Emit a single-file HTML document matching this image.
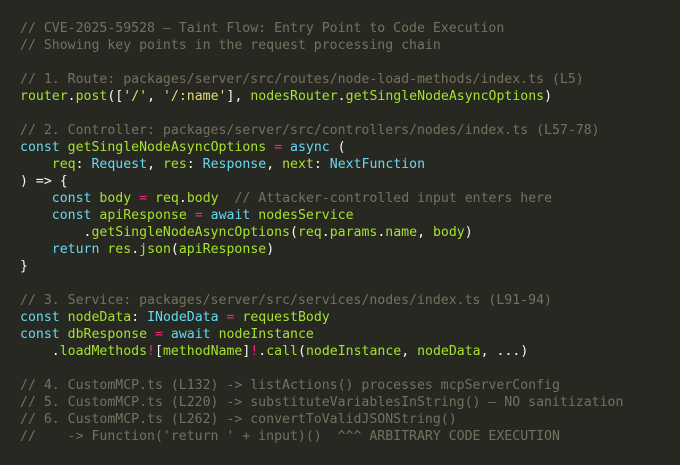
<!DOCTYPE html>
<html><head><meta charset="utf-8"><style>
html,body{margin:0;padding:0;background:#272822;width:680px;height:465px;overflow:hidden}
pre{margin:0;padding:19.5px 0 0 20px;font-family:"DejaVu Sans Mono","Liberation Mono",monospace;font-size:13.2px;line-height:17.03px;color:#f8f8f2}
.c{color:#75715e}.k{color:#66d9ef}.g{color:#a6e22e}.p{color:#f92672}.s{color:#e6db74}
</style></head><body><pre><span class="c">// CVE-2025-59528 — Taint Flow: Entry Point to Code Execution</span>
<span class="c">// Showing key points in the request processing chain</span>

<span class="c">// 1. Route: packages/server/src/routes/node-load-methods/index.ts (L5)</span>
<span class="g">router</span>.<span class="g">post</span>([<span class="s">'/'</span>, <span class="s">'/:name'</span>], <span class="g">nodesRouter</span>.<span class="g">getSingleNodeAsyncOptions</span>)

<span class="c">// 2. Controller: packages/server/src/controllers/nodes/index.ts (L57-78)</span>
<span class="k">const</span> <span class="g">getSingleNodeAsyncOptions</span> <span class="p">=</span> <span class="k">async</span> (
    <span class="g">req</span>: <span class="k">Request</span>, <span class="g">res</span>: <span class="k">Response</span>, <span class="g">next</span>: <span class="k">NextFunction</span>
) =&gt; {
    <span class="k">const</span> <span class="g">body</span> <span class="p">=</span> <span class="g">req</span>.<span class="g">body</span>  <span class="c">// Attacker-controlled input enters here</span>
    <span class="k">const</span> <span class="g">apiResponse</span> <span class="p">=</span> <span class="k">await</span> <span class="g">nodesService</span>
        .<span class="g">getSingleNodeAsyncOptions</span>(<span class="g">req</span>.<span class="g">params</span>.<span class="g">name</span>, <span class="g">body</span>)
    <span class="k">return</span> <span class="g">res</span>.<span class="g">json</span>(<span class="g">apiResponse</span>)
}

<span class="c">// 3. Service: packages/server/src/services/nodes/index.ts (L91-94)</span>
<span class="k">const</span> <span class="g">nodeData</span>: <span class="k">INodeData</span> <span class="p">=</span> <span class="g">requestBody</span>
<span class="k">const</span> <span class="g">dbResponse</span> <span class="p">=</span> <span class="k">await</span> <span class="g">nodeInstance</span>
    .<span class="g">loadMethods</span><span class="p">!</span>[<span class="g">methodName</span>]<span class="p">!</span>.<span class="g">call</span>(<span class="g">nodeInstance</span>, <span class="g">nodeData</span>, ...)

<span class="c">// 4. CustomMCP.ts (L132) -&gt; listActions() processes mcpServerConfig</span>
<span class="c">// 5. CustomMCP.ts (L220) -&gt; substituteVariablesInString() — NO sanitization</span>
<span class="c">// 6. CustomMCP.ts (L262) -&gt; convertToValidJSONString()</span>
<span class="c">//    -&gt; Function('return ' + input)()  ^^^ ARBITRARY CODE EXECUTION</span></pre></body></html>
